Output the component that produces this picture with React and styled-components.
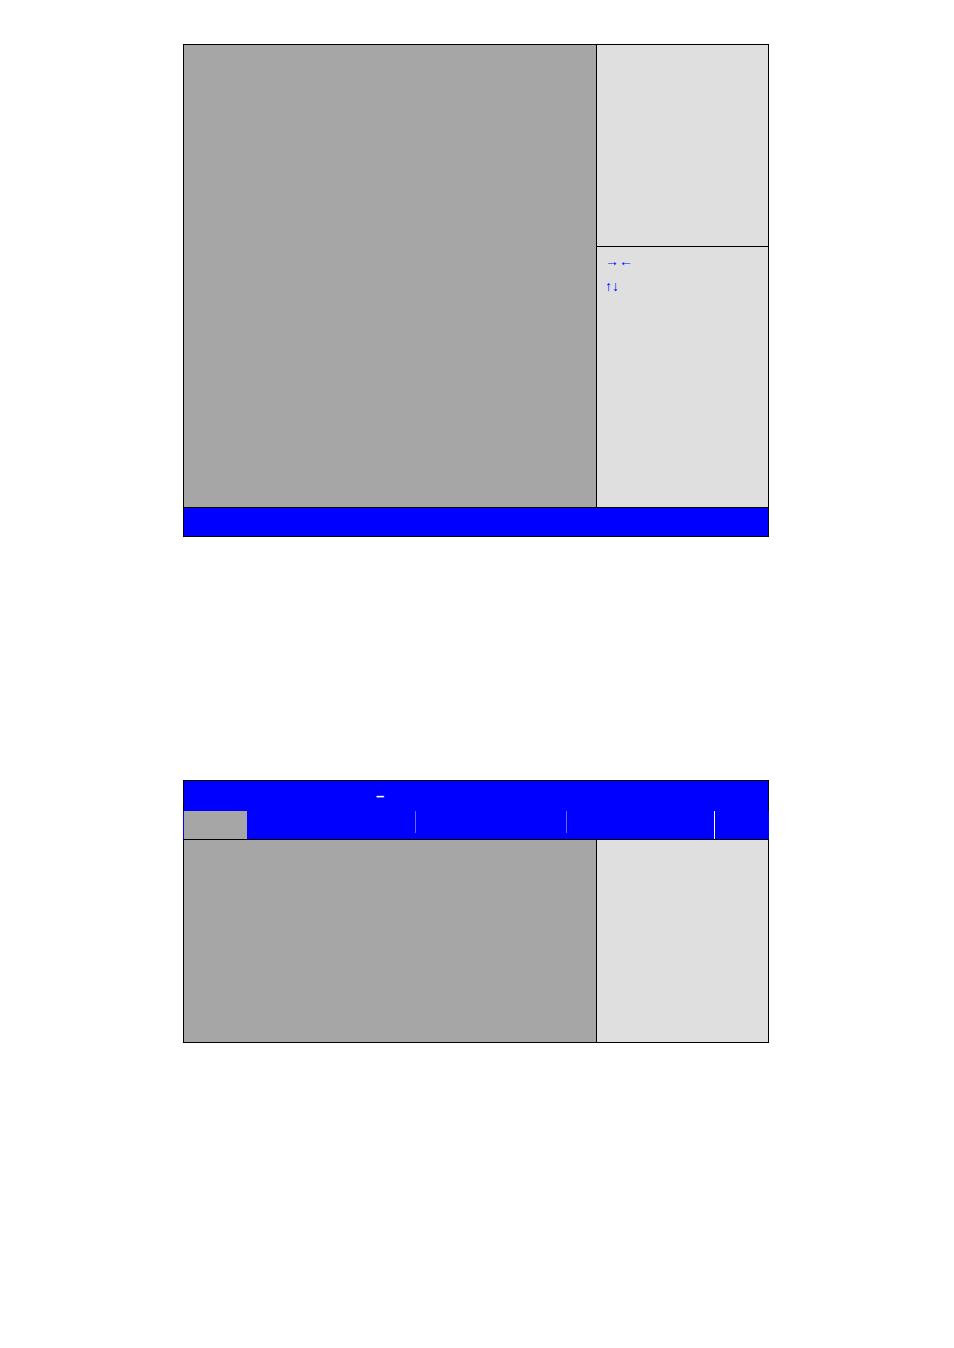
import styled, { createGlobalStyle } from 'styled-components'

const colors = {
  blue: '#0000ff',
  line: '#000000',
  main: '#a6a6a6',
  side: '#dfdfdf',
  separator: '#6666ff',
  white: '#ffffff',
}

const GlobalStyle = createGlobalStyle`
  * {
    box-sizing: border-box;
  }

  body {
    margin: 0;
    background-color: ${colors.white};
    font-family: 'Liberation Sans', Arial, sans-serif;
  }
`

const Page = styled.main`
  display: flex;
  flex-direction: column;
  gap: 243px;
  min-height: 100vh;
  padding: 44px 185px 44px 183px;
`

const Screen = styled.section`
  border: 1px solid ${colors.line};
`

const Body = styled.div`
  display: grid;
  grid-template-columns: 412fr 172fr;
`

const Content = styled.div`
  background-color: ${colors.main};
`

const Side = styled.aside`
  border-left: 1px solid ${colors.line};
  background-color: ${colors.side};
`

const Help = styled.div`
  min-height: ${({ $tall }) => ($tall ? '201px' : '202px')};
`

const Keys = styled.ul`
  min-height: 261px;
  margin: 0;
  padding: 2px 8px;
  border-top: 1px solid ${colors.line};
  color: ${colors.blue};
  font-size: 14px;
  line-height: 25px;
  list-style: none;
`

const Footer = styled.footer`
  height: 29px;
  border-top: 1px solid ${colors.line};
  background-color: ${colors.blue};
`

const Title = styled.header`
  height: 30px;
  padding-left: 192px;
  background-color: ${colors.blue};
  color: ${colors.white};
  font-size: 15px;
  font-weight: bold;
  line-height: 30px;
`

// The menu bar runs over the side borders of the screen
const Menu = styled.div`
  display: grid;
  grid-template-columns: 63fr 169fr 151fr 148fr 53fr;
  height: 28px;
  margin: 0 -1px;
  border: solid ${colors.blue};
  border-width: 0 1px;
  background-color: ${colors.blue};
`

const MenuItem = styled.div`
  height: ${({ $short }) => ($short ? '22px' : '28px')};
  border-right: ${({ $line }) => ($line ? `1px solid ${$line}` : 'none')};
  background-color: ${({ $active }) => ($active ? colors.main : colors.blue)};
`

const MenuBody = styled(Body)`
  border-top: 1px solid ${colors.line};
`

function KeysScreen() {
  return (
    <Screen>
      <Body>
        <Content />
        <Side>
          <Help $tall />
          <Keys>
            <li>→←</li>
            <li>↑↓</li>
          </Keys>
        </Side>
      </Body>
      <Footer />
    </Screen>
  )
}

function MenuScreen() {
  return (
    <Screen>
      <Title>–</Title>
      <Menu>
        <MenuItem $active />
        <MenuItem $short $line={colors.separator} />
        <MenuItem $short $line={colors.separator} />
        <MenuItem $line={colors.white} />
        <MenuItem />
      </Menu>
      <MenuBody>
        <Content />
        <Side>
          <Help />
        </Side>
      </MenuBody>
    </Screen>
  )
}

function App() {
  return (
    <>
      <GlobalStyle />
      <Page>
        <KeysScreen />
        <MenuScreen />
      </Page>
    </>
  )
}

export default App
